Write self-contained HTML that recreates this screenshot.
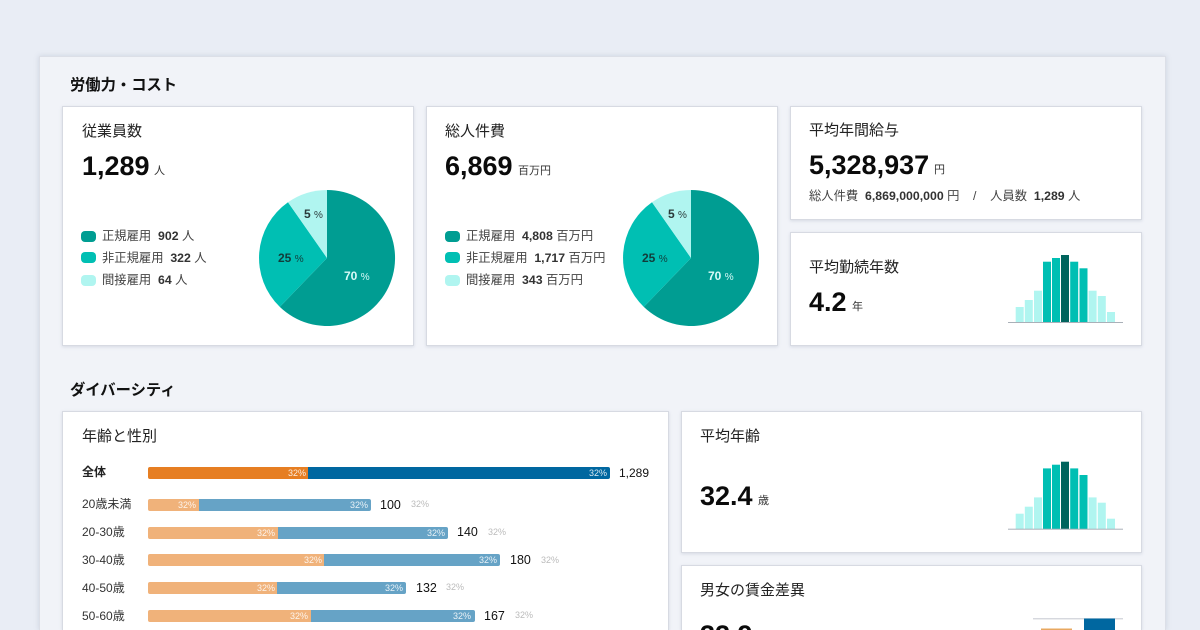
<!DOCTYPE html>
<html lang="ja"><head><meta charset="utf-8"><title>Dashboard</title>
<style>
html,body{margin:0;padding:0;width:1200px;height:630px;overflow:hidden}
body{background:#e9edf5;font-family:"Liberation Sans","Noto Sans CJK JP",sans-serif;color:#111}
#wrap{position:absolute;left:0;top:0;width:1200px;height:630px;overflow:hidden;background:#e9edf5}
.panel{position:absolute;left:39px;top:56px;width:1125px;height:574px;background:#f1f3f8;border:1px solid #dcdfe7;border-bottom:none;box-sizing:content-box;box-shadow:0 0 5px rgba(120,130,160,.25)}
.card{position:absolute;background:#fff;border:1px solid #d7dae2;box-sizing:border-box;box-shadow:0 1px 3px rgba(120,130,160,.22)}
.cut{border-bottom:none}
.t{position:absolute;white-space:nowrap;line-height:20px;height:20px}
.h{font-size:15.3px;font-weight:700;color:#111}
.ti{font-size:15px;color:#222}
.n{font-size:27px;font-weight:700;color:#0b0b0b}
.u{font-size:11px;color:#333}
.l{font-size:12.3px;color:#444}
.l b{color:#333;font-weight:700}
.r{font-size:12px;color:#333}
.c{font-size:12.5px;color:#111}
.g{font-size:9px;color:#bbb}
.w{font-size:9px;color:rgba(255,255,255,.85)}
.bar{position:absolute;height:12px;box-sizing:border-box}
.dot{position:absolute;width:15px;height:11px;border-radius:4px}
svg{position:absolute;left:0;top:0}
</style></head><body><div id="wrap">
<div class="panel" style="height:573px"></div>
<div class="t h" style="left:70px;top:76px">労働力・コスト</div>
<div class="t h" style="left:70px;top:381px">ダイバーシティ</div>

<div class="card" style="left:62px;top:106px;width:352px;height:240px"></div>
<div class="card" style="left:426px;top:106px;width:352px;height:240px"></div>
<div class="card" style="left:790px;top:106px;width:352px;height:114px"></div>
<div class="card" style="left:790px;top:232px;width:352px;height:114px"></div>
<div class="card cut" style="left:62px;top:411px;width:607px;height:219px"></div>
<div class="card" style="left:681px;top:411px;width:461px;height:142px"></div>
<div class="card cut" style="left:681px;top:565px;width:461px;height:65px"></div>

<svg width="1200" height="630" viewBox="0 0 1200 630">
<g>
<path d="M327 258V190A68 68 0 1 1 279.8 306.9Z" fill="#009d92"/>
<path d="M327 258L279.8 306.9A68 68 0 0 1 288 202.3Z" fill="#00bfb3"/>
<path d="M327 258L288 202.3A68 68 0 0 1 327 190Z" fill="#b0f5f0"/>
</g>
<g>
<path d="M691 258V190A68 68 0 1 1 643.8 306.9Z" fill="#009d92"/>
<path d="M691 258L643.8 306.9A68 68 0 0 1 652 202.3Z" fill="#00bfb3"/>
<path d="M691 258L652 202.3A68 68 0 0 1 691 190Z" fill="#b0f5f0"/>
</g>
<g>
<rect x="1015.7" y="307" width="8" height="15.3" fill="#b0f5f0"/>
<rect x="1024.8" y="300" width="8" height="22.3" fill="#b0f5f0"/>
<rect x="1034" y="290.7" width="8" height="31.6" fill="#b0f5f0"/>
<rect x="1043" y="261.7" width="8" height="60.6" fill="#00bfb3"/>
<rect x="1052" y="258" width="8" height="64.3" fill="#00bfb3"/>
<rect x="1061" y="255" width="8" height="67.3" fill="#00645d"/>
<rect x="1070.2" y="261.7" width="8" height="60.6" fill="#00bfb3"/>
<rect x="1079.5" y="268.3" width="8" height="54" fill="#00bfb3"/>
<rect x="1088.6" y="290.7" width="8" height="31.6" fill="#b0f5f0"/>
<rect x="1097.8" y="296" width="8" height="26.3" fill="#b0f5f0"/>
<rect x="1107" y="312" width="8" height="10.3" fill="#b0f5f0"/>
<rect x="1008" y="322" width="115" height="1" fill="#aab0b8"/>
</g>
<g transform="translate(0,206.7)">
<rect x="1015.7" y="307" width="8" height="15.3" fill="#b0f5f0"/>
<rect x="1024.8" y="300" width="8" height="22.3" fill="#b0f5f0"/>
<rect x="1034" y="290.7" width="8" height="31.6" fill="#b0f5f0"/>
<rect x="1043" y="261.7" width="8" height="60.6" fill="#00bfb3"/>
<rect x="1052" y="258" width="8" height="64.3" fill="#00bfb3"/>
<rect x="1061" y="255" width="8" height="67.3" fill="#00645d"/>
<rect x="1070.2" y="261.7" width="8" height="60.6" fill="#00bfb3"/>
<rect x="1079.5" y="268.3" width="8" height="54" fill="#00bfb3"/>
<rect x="1088.6" y="290.7" width="8" height="31.6" fill="#b0f5f0"/>
<rect x="1097.8" y="296" width="8" height="26.3" fill="#b0f5f0"/>
<rect x="1107" y="312" width="8" height="10.3" fill="#b0f5f0"/>
<rect x="1008" y="322" width="115" height="1" fill="#aab0b8"/>
</g>
<rect x="1033" y="618.3" width="90" height="1" fill="#c4c8d0"/>
<rect x="1084" y="618.5" width="31" height="11.5" fill="#0067a0"/>
<rect x="1041" y="628.5" width="31" height="1.5" fill="#e8a860"/>
</svg>

<!-- card 1 -->
<div class="t ti" style="left:82px;top:122px">従業員数</div>
<div class="t n" style="left:82px;top:156px">1,289</div>
<div class="t u" style="left:154px;top:161px">人</div>
<div class="dot" style="left:81px;top:231px;background:#009d92"></div>
<div class="dot" style="left:81px;top:252px;background:#00bfb3"></div>
<div class="dot" style="left:81px;top:275px;background:#b0f5f0"></div>
<div class="t l" style="left:102px;top:226px">正規雇用&nbsp; <b>902</b> 人</div>
<div class="t l" style="left:102px;top:248px">非正規雇用&nbsp; <b>322</b> 人</div>
<div class="t l" style="left:102px;top:270px">間接雇用&nbsp; <b>64</b> 人</div>
<div class="t" style="left:304px;top:204px;font-size:12px;color:#2a3a3a"><b>5</b> <span style="font-size:10px">%</span></div>
<div class="t" style="left:278px;top:248px;font-size:12px;color:#123c3a"><b>25</b> <span style="font-size:10px">%</span></div>
<div class="t" style="left:344px;top:266px;font-size:12px;color:#d8fbf8"><b>70</b> <span style="font-size:10px">%</span></div>

<!-- card 2 -->
<div class="t ti" style="left:445px;top:122px">総人件費</div>
<div class="t n" style="left:445px;top:156px">6,869</div>
<div class="t u" style="left:518px;top:161px">百万円</div>
<div class="dot" style="left:445px;top:231px;background:#009d92"></div>
<div class="dot" style="left:445px;top:252px;background:#00bfb3"></div>
<div class="dot" style="left:445px;top:275px;background:#b0f5f0"></div>
<div class="t l" style="left:466px;top:226px">正規雇用&nbsp; <b>4,808</b> 百万円</div>
<div class="t l" style="left:466px;top:248px">非正規雇用&nbsp; <b>1,717</b> 百万円</div>
<div class="t l" style="left:466px;top:270px">間接雇用&nbsp; <b>343</b> 百万円</div>
<div class="t" style="left:668px;top:204px;font-size:12px;color:#2a3a3a"><b>5</b> <span style="font-size:10px">%</span></div>
<div class="t" style="left:642px;top:248px;font-size:12px;color:#123c3a"><b>25</b> <span style="font-size:10px">%</span></div>
<div class="t" style="left:708px;top:266px;font-size:12px;color:#d8fbf8"><b>70</b> <span style="font-size:10px">%</span></div>

<!-- card 3 -->
<div class="t ti" style="left:809px;top:121px">平均年間給与</div>
<div class="t n" style="left:809px;top:155px">5,328,937</div>
<div class="t u" style="left:934px;top:160px">円</div>
<div class="t l" style="left:809px;top:186px">総人件費&nbsp; <b>6,869,000,000</b> 円 &nbsp; &nbsp;/ &nbsp; &nbsp;人員数&nbsp; <b>1,289</b> 人</div>

<!-- card 4 -->
<div class="t ti" style="left:809px;top:258px">平均勤続年数</div>
<div class="t n" style="left:809px;top:292px">4.2</div>
<div class="t u" style="left:852px;top:297px">年</div>

<!-- card 5 -->
<div class="t ti" style="left:82px;top:427px">年齢と性別</div>
<div class="t" style="left:82px;top:462px;font-size:12px;font-weight:700;color:#222">全体</div>
<div class="bar" style="left:148px;top:467px;width:160px;background:#e67e22;border-radius:2px 0 0 2px"></div>
<div class="bar" style="left:308px;top:467px;width:302px;background:#0067a0;border-radius:0 2px 2px 0"></div>
<div class="t w" style="left:288px;top:463px">32%</div>
<div class="t w" style="left:589px;top:463px">32%</div>
<div class="t c" style="left:619px;top:463px;font-size:12px">1,289</div>

<div class="t r" style="left:82px;top:494px">20歳未満</div>
<div class="bar" style="left:148px;top:499px;width:51px;background:#f0b27a;border-radius:2px 0 0 2px"></div>
<div class="bar" style="left:199px;top:499px;width:172px;background:#66a3c6;border-radius:0 2px 2px 0"></div>
<div class="t w" style="left:178px;top:495px">32%</div>
<div class="t w" style="left:350px;top:495px">32%</div>
<div class="t c" style="left:380px;top:495px">100</div>
<div class="t g" style="left:411px;top:494px">32%</div>

<div class="t r" style="left:82px;top:522px">20-30歳</div>
<div class="bar" style="left:148px;top:527px;width:130px;background:#f0b27a;border-radius:2px 0 0 2px"></div>
<div class="bar" style="left:278px;top:527px;width:170px;background:#66a3c6;border-radius:0 2px 2px 0"></div>
<div class="t w" style="left:257px;top:523px">32%</div>
<div class="t w" style="left:427px;top:523px">32%</div>
<div class="t c" style="left:457px;top:522px">140</div>
<div class="t g" style="left:488px;top:522px">32%</div>

<div class="t r" style="left:82px;top:550px">30-40歳</div>
<div class="bar" style="left:148px;top:554px;width:176px;background:#f0b27a;border-radius:2px 0 0 2px"></div>
<div class="bar" style="left:324px;top:554px;width:176px;background:#66a3c6;border-radius:0 2px 2px 0"></div>
<div class="t w" style="left:304px;top:550px">32%</div>
<div class="t w" style="left:479px;top:550px">32%</div>
<div class="t c" style="left:510px;top:550px">180</div>
<div class="t g" style="left:541px;top:550px">32%</div>

<div class="t r" style="left:82px;top:578px">40-50歳</div>
<div class="bar" style="left:148px;top:582px;width:129px;background:#f0b27a;border-radius:2px 0 0 2px"></div>
<div class="bar" style="left:277px;top:582px;width:129px;background:#66a3c6;border-radius:0 2px 2px 0"></div>
<div class="t w" style="left:257px;top:578px">32%</div>
<div class="t w" style="left:385px;top:578px">32%</div>
<div class="t c" style="left:416px;top:578px">132</div>
<div class="t g" style="left:446px;top:577px">32%</div>

<div class="t r" style="left:82px;top:606px">50-60歳</div>
<div class="bar" style="left:148px;top:610px;width:163px;background:#f0b27a;border-radius:2px 0 0 2px"></div>
<div class="bar" style="left:311px;top:610px;width:164px;background:#66a3c6;border-radius:0 2px 2px 0"></div>
<div class="t w" style="left:290px;top:606px">32%</div>
<div class="t w" style="left:453px;top:606px">32%</div>
<div class="t c" style="left:484px;top:606px">167</div>
<div class="t g" style="left:515px;top:605px">32%</div>

<!-- card 6 -->
<div class="t ti" style="left:700px;top:427px">平均年齢</div>
<div class="t n" style="left:700px;top:486px">32.4</div>
<div class="t u" style="left:758px;top:491px">歳</div>

<!-- card 7 -->
<div class="t ti" style="left:700px;top:581px">男女の賃金差異</div>
<div style="position:absolute;left:700px;top:612px;width:80px;height:18px;overflow:hidden"><div class="t n" style="left:0;top:13px">32.9</div></div>
</div></body></html>
